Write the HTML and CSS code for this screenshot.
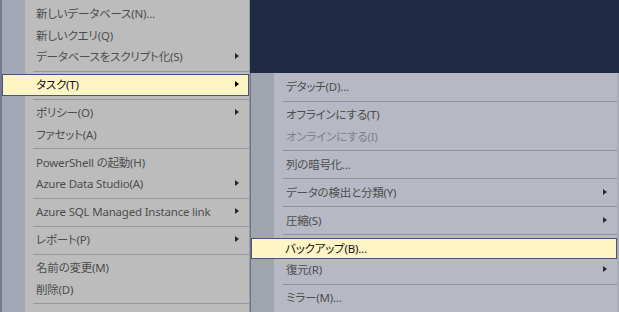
FILE: index.html
```html
<!DOCTYPE html>
<html lang="ja">
<head>
    <meta charset="UTF-8">
    <title>コンテキストメニュー</title>
    <link rel="stylesheet" href="styles.css">
</head>
<body>

<div class="desktop">
    <!-- メインメニュー -->
    <ul class="menu main-menu">
        <li class="item">新しいデータベース(N)...</li>
        <li class="item">新しいクエリ(Q)</li>
        <li class="item has-sub">データベースをスクリプト化(S)</li>
        <li class="sep"></li>
        <li class="item has-sub active">タスク(T)</li>
        <li class="sep"></li>
        <li class="item has-sub">ポリシー(O)</li>
        <li class="item">ファセット(A)</li>
        <li class="sep"></li>
        <li class="item">PowerShell の起動(H)</li>
        <li class="item has-sub">Azure Data Studio(A)</li>
        <li class="sep"></li>
        <li class="item has-sub">Azure SQL Managed Instance link</li>
        <li class="sep"></li>
        <li class="item has-sub">レポート(P)</li>
        <li class="sep"></li>
        <li class="item">名前の変更(M)</li>
        <li class="item">削除(D)</li>
        <li class="sep"></li>
    </ul>

    <!-- タスク サブメニュー -->
    <ul class="menu sub-menu">
        <li class="item">デタッチ(D)...</li>
        <li class="sep"></li>
        <li class="item">オフラインにする(T)</li>
        <li class="item disabled">オンラインにする(I)</li>
        <li class="sep"></li>
        <li class="item">列の暗号化...</li>
        <li class="sep"></li>
        <li class="item has-sub">データの検出と分類(Y)</li>
        <li class="sep"></li>
        <li class="item has-sub">圧縮(S)</li>
        <li class="sep"></li>
        <li class="item active">バックアップ(B)...</li>
        <li class="item has-sub">復元(R)</li>
        <li class="sep"></li>
        <li class="item">ミラー(M)...</li>
    </ul>
</div>

</body>
</html>
```

FILE: styles.css
```css
html, body {
    margin: 0;
    padding: 0;
}

body {
    background: #1f2a45;
    font-family: "Noto Sans", "Noto Sans CJK JP", sans-serif;
    font-size: 11.5px;
    letter-spacing: -0.2px;
    font-feature-settings: "palt";
    overflow: hidden;
}

.desktop {
    display: flex;
    align-items: flex-start;
    width: 619px;
    height: 312px;
    overflow: hidden;
}

.menu {
    list-style: none;
    margin: 0;
    box-sizing: border-box;
}

/* メインメニュー：左に濃い溝 */
.main-menu {
    width: 250px;
    padding: 3.25px 0 20px;
    border-left: 2px solid #727990;
    border-right: 1px solid #999ba1;
    background: linear-gradient(to right, #a3a8b7 0, #a3a8b7 23px, #bcbcbc 23px);
}

/* サブメニュー */
.sub-menu {
    flex: 1;
    margin-top: 73px;
    padding: 3.25px 0 20px;
    border-left: 1px solid #6d7386;
    border-right: 2px solid #a9adb8;
    background: linear-gradient(to right, #a0a4af 0, #a0a4af 23px, #b6b9c4 23px);
}

.item {
    position: relative;
    height: 21.5px;
    line-height: 21.5px;
    padding-left: 34px;
    color: #4e4e4e;
    white-space: nowrap;
    box-sizing: border-box;
}

.sub-menu .item {
    padding-left: 35px;
}

.item.disabled {
    color: #7e818a;
}

.item.active {
    background: #fff4c4;
    border: 1px solid #46557f;
    color: #111;
    line-height: 19.5px;
    padding-left: 33px;
}

.sub-menu .item.active {
    padding-left: 33px;
}

/* 右向きの三角 */
.has-sub::after {
    content: "";
    position: absolute;
    right: 10px;
    top: 7px;
    border-left: 4px solid #2a2a2a;
    border-top: 3.5px solid transparent;
    border-bottom: 3.5px solid transparent;
}

.has-sub.active::after {
    top: 6px;
    right: 9px;
    border-left-color: #000;
}

.sep {
    height: 6.5px;
    position: relative;
}

.sep::before {
    content: "";
    position: absolute;
    left: 31px;
    right: 0;
    top: 3px;
    border-top: 1px solid #96979b;
}

.sub-menu .sep::before {
    left: 32px;
    border-top-color: #8f939d;
}
```
